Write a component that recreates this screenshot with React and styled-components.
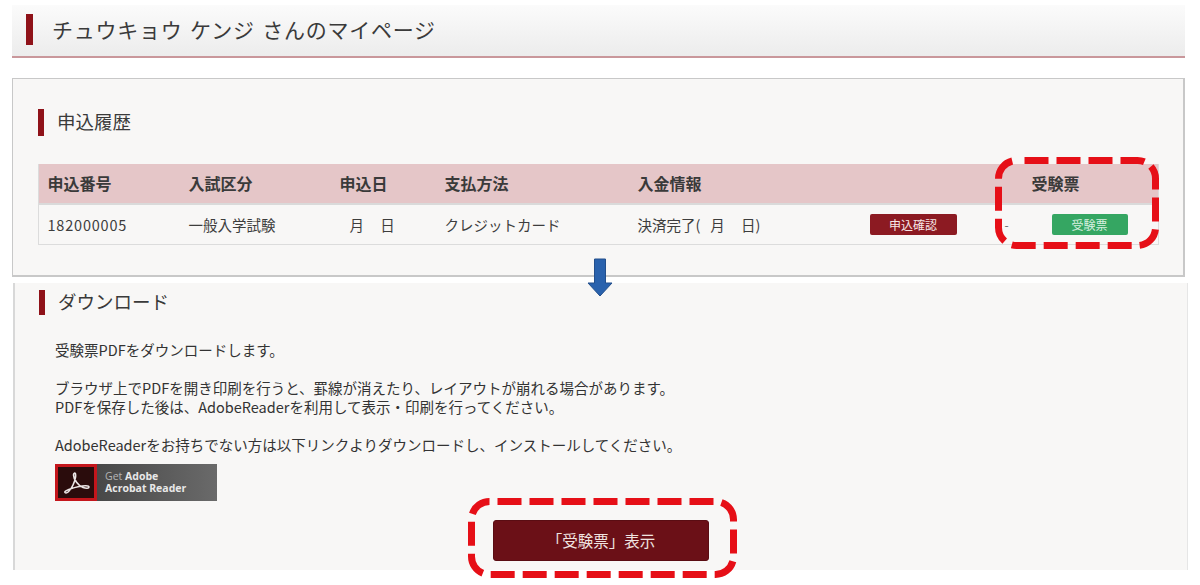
import React from "react";
import styled, { createGlobalStyle } from "styled-components";

const GlobalStyle = createGlobalStyle`
  html, body {
    margin: 0;
    padding: 0;
    background: #fff;
  }
  body {
    font-family: "Noto Sans CJK JP", "Noto Sans", sans-serif;
    color: #333;
  }
`;

const Page = styled.div`
  position: relative;
  width: 1200px;
  height: 585px;
  overflow: hidden;
  padding-top: 5px;
  box-sizing: border-box;
`;

const PageHeader = styled.header`
  display: flex;
  align-items: center;
  gap: 19px;
  height: 53px;
  margin: 0 15px 0 12px;
  padding: 0 0 3px 14px;
  box-sizing: border-box;
  background: linear-gradient(#fbfbfb, #ececec);
  border-bottom: 2px solid #c9979b;
`;

const Bar = styled.span`
  display: block;
  flex: none;
  width: ${(props) => props.w || 6}px;
  height: ${(props) => props.h || 27}px;
  background: #8f1219;
`;

const PageTitle = styled.h1`
  margin: 0;
  font-size: 21px;
  font-weight: 400;
  line-height: 1;
  letter-spacing: 0.76px;
  word-spacing: 2px;
  color: #3a3a3a;
`;

const HistoryPanel = styled.section`
  height: 199px;
  margin: 20px 15px 0 12px;
  padding: 30px 25px 0;
  box-sizing: border-box;
  background: #f8f7f6;
  border: 1px solid #c8c8c8;
  border-width: 1px 2px 2px 1px;
`;

const SectionHead = styled.div`
  display: flex;
  align-items: center;
  gap: 13px;
`;

const SectionTitle = styled.h2`
  margin: 0;
  padding-bottom: 3px;
  font-size: 18.5px;
  font-weight: 400;
  line-height: 1;
  color: #3a3a3a;
`;

const Table = styled.div`
  margin-top: 28px;
  width: 1121px;
  box-sizing: border-box;
  border: 1px solid #dcdcdc;
  border-top: 0;
`;

const Row = styled.div`
  display: grid;
  grid-template-columns: 141px 151px 105px 193px 232px 162px 1fr;
  align-items: center;
  padding-left: 8.5px;
  height: ${(props) => (props.head ? 41 : 39)}px;
  box-sizing: border-box;
  background: ${(props) => (props.head ? "#e5c6c8" : "transparent")};
  border-bottom: ${(props) => (props.head ? "2px solid #dadada" : "0")};
`;

const HeadCell = styled.div`
  padding-bottom: 2px;
  font-size: 16px;
  font-weight: 700;
  color: #3a3a3a;
`;

const Cell = styled.div`
  display: flex;
  align-items: center;
  font-size: 14.5px;
  line-height: 20px;
  letter-spacing: ${(props) => props.ls || 0}px;
  color: #3d3d3d;
  padding-left: ${(props) => props.pad || 0}px;
  white-space: pre;
`;

const SmallButton = styled.div`
  display: flex;
  align-items: center;
  justify-content: center;
  width: ${(props) => props.w}px;
  height: 21px;
  margin-left: ${(props) => props.ml || 0}px;
  border-radius: 2px;
  font-size: 12px;
  color: ${(props) => (props.green ? "#d8f0e0" : "#f6e6e6")};
  background: ${(props) => (props.green ? "#35a662" : "#8c1a22")};
`;

const Dash = styled.span`
  margin-left: 48px;
  font-size: 12px;
  color: #666;
`;

const DownloadPanel = styled.section`
  height: 287px;
  margin: 6px 12px 0 13px;
  padding: 7px 24px 0;
  box-sizing: border-box;
  background: #f8f7f6;
  border-left: 2px solid #d8d8d8;
  border-right: 1px solid #e6e6e6;
`;

const Copy = styled.div`
  margin: 25px 0 0 16px;
  font-size: 14.5px;
  line-height: 19px;
  color: #333;
`;

const Para = styled.p`
  margin: 0 0 19px;
`;

const AdobeBadge = styled.div`
  display: flex;
  width: 162px;
  height: 37px;
  margin: -9px 0 0 16px;
  background: linear-gradient(90deg, #3c3c3c, #6a6a6a);
`;

const AdobeIcon = styled.div`
  display: flex;
  align-items: center;
  justify-content: center;
  flex: none;
  width: 42px;
  box-sizing: border-box;
  background: #2a0c0c;
  border: 3px solid #c4161c;
`;

const AdobeText = styled.div`
  padding: 6px 0 0 8px;
  font-family: "Open Sans", sans-serif;
  font-size: 10.5px;
  line-height: 12px;
  font-weight: 700;
  color: #e8e8e8;
  span {
    font-weight: 400;
    color: #b5b5b5;
  }
`;

const ShowButton = styled.div`
  display: flex;
  align-items: center;
  justify-content: center;
  width: 216px;
  height: 41px;
  margin: 19px 0 0 454px;
  padding-bottom: 2px;
  border-radius: 3px;
  background: #6b1017;
  border: 1px solid #5a0d13;
  box-sizing: border-box;
  font-size: 15.5px;
  color: #f0e4e0;
`;

const DashFrame = styled.svg`
  position: absolute;
  left: ${(props) => props.x}px;
  top: ${(props) => props.y}px;
`;

const DownArrow = styled.svg`
  position: absolute;
  left: 587px;
  top: 258px;
`;

function DashedBox({ x, y, w, h }) {
  return (
    <DashFrame x={x} y={y} width={w} height={h} viewBox={`0 0 ${w} ${h}`}>
      <rect
        x="3.5"
        y="3.5"
        width={w - 7}
        height={h - 7}
        rx="18"
        fill="none"
        stroke="#e60f17"
        strokeWidth="7"
        strokeDasharray="24 8"
        strokeDashoffset="24"
      />
    </DashFrame>
  );
}

export default function App() {
  return (
    <Page>
      <GlobalStyle />
      <PageHeader>
        <Bar w={7} h={31} />
        <PageTitle>チュウキョウ ケンジ さんのマイページ</PageTitle>
      </PageHeader>

      <HistoryPanel>
        <SectionHead>
          <Bar />
          <SectionTitle>申込履歴</SectionTitle>
        </SectionHead>
        <Table>
          <Row head>
            <HeadCell>申込番号</HeadCell>
            <HeadCell>入試区分</HeadCell>
            <HeadCell>申込日</HeadCell>
            <HeadCell>支払方法</HeadCell>
            <HeadCell>入金情報</HeadCell>
            <HeadCell />
            <HeadCell>受験票</HeadCell>
          </Row>
          <Row>
            <Cell ls={0.8}>182000005</Cell>
            <Cell>一般入学試験</Cell>
            <Cell pad={10}>{"月     日"}</Cell>
            <Cell>クレジットカード</Cell>
            <Cell>{"決済完了(   月     日)"}</Cell>
            <Cell>
              <SmallButton w={87}>申込確認</SmallButton>
              <Dash>-</Dash>
            </Cell>
            <Cell>
              <SmallButton green w={76} ml={20}>
                受験票
              </SmallButton>
            </Cell>
          </Row>
        </Table>
      </HistoryPanel>

      <DownloadPanel>
        <SectionHead>
          <Bar h={25} />
          <SectionTitle>ダウンロード</SectionTitle>
        </SectionHead>
        <Copy>
          <Para>受験票PDFをダウンロードします。</Para>
          <Para>
            ブラウザ上でPDFを開き印刷を行うと、罫線が消えたり、レイアウトが崩れる場合があります。
            <br />
            PDFを保存した後は、AdobeReaderを利用して表示・印刷を行ってください。
          </Para>
          <Para>AdobeReaderをお持ちでない方は以下リンクよりダウンロードし、インストールしてください。</Para>
        </Copy>
        <AdobeBadge>
          <AdobeIcon>
            <svg width="29" height="25" viewBox="0 0 29 25">
              <path
                d="M3 22.500c1.500 1.500 5-1 8-7.500 2-4.500 3-9 2.500-11-.4-1.500-2-1-2 1 0 4 5 11 9.500 12.500 3 1 6 1 6-.5 0-1.500-5-1.500-10-.5C10 18 1.500 21 3 22.500z"
                fill="none"
                stroke="#ece6e6"
                strokeWidth="1.600"
              />
            </svg>
          </AdobeIcon>
          <AdobeText>
            <span>Get </span>Adobe
            <br />
            Acrobat Reader
          </AdobeText>
        </AdobeBadge>
        <ShowButton>「受験票」表示</ShowButton>
      </DownloadPanel>

      <DownArrow width="26" height="40" viewBox="0 0 26 40">
        <path d="M7.500 1h11v24H25L13 38 1 25h6.500z" fill="#2a62ad" stroke="#234f8c" strokeWidth="1" />
      </DownArrow>
      <DashedBox x={995} y={157} w={164} h={92} />
      <DashedBox x={468} y={498} w={269} h={80} />
    </Page>
  );
}
